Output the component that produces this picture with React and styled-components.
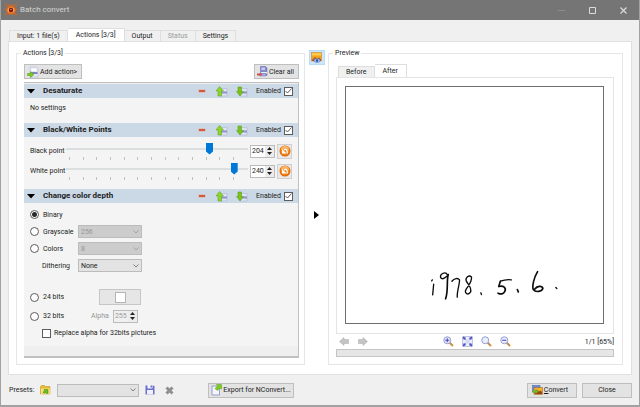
import React, { useState } from 'react';
import styled, { createGlobalStyle, css } from 'styled-components';

const GlobalStyle = createGlobalStyle`
  * {
    box-sizing: border-box;
  }
  body {
    margin: 0;
    font-family: Roboto, 'Noto Sans', sans-serif;
    font-size: 7px;
    line-height: 10px;
    color: #1c1c1c;
    background: #f0f0f0;
  }
  button, input, select {
    font: inherit;
    color: inherit;
    margin: 0;
    padding: 0;
  }
  svg {
    display: block;
    flex: none;
  }
`;

/* icons */

const LogoIcon = () => (
  <svg width="12" height="12" viewBox="0 0 24 24">
    <path
      d="M4 4L1 1M20 4l3-3M3 11H0M21 11h3M4 18l-3 4M20 18l3 4M9 3L8 0M15 3l1-3"
      stroke="#d9641c"
      strokeWidth="3"
    />
    <circle cx="12" cy="12" r="9.5" fill="#e06a20" />
    <ellipse cx="12" cy="12" rx="7" ry="5" fill="#f3ae6a" />
    <circle cx="12" cy="12" r="4.5" fill="#7c1408" />
    <circle cx="12" cy="11" r="1.5" fill="#e8a070" />
  </svg>
);

const AddIcon = () => (
  <svg width="12" height="12" viewBox="0 0 24 24">
    <path d="M6 2h13l3 3v17H6z" fill="#e4e8f6" stroke="#a9afd0" />
    <path d="M9 5h10v5H9z" fill="#fff" />
    <path d="M7 12h14v4H7z" fill="#8086c4" />
    <path d="M1 15h6v-4l7 6-7 6v-4H1z" fill="#7ccb1c" stroke="#4f9a12" />
  </svg>
);

const ClearIcon = () => (
  <svg width="11" height="11" viewBox="0 0 22 22">
    <path d="M7 1h10l3 3v15H7z" fill="#8389cc" stroke="#5c62a8" />
    <path d="M9 3h7v5H9z" fill="#c9cdf0" />
    <path d="M8 12h12v3H8z" fill="#e9ebfa" />
    <path d="M5 15h13v5H5z" fill="#a9aee0" stroke="#696fb4" />
    <path d="M0 15h10v4H0z" fill="#cf5545" />
  </svg>
);

const MinusIcon = () => (
  <svg width="8" height="4" viewBox="0 0 16 8">
    <rect x="1" y="1" width="14" height="6" rx="1" fill="#eba595" />
    <rect x="2" y="2" width="12" height="4" fill="#cf5a43" />
  </svg>
);

const MoveIcon = ({ down }) => (
  <svg width="12" height="11" viewBox="0 0 24 22">
    <path d="M8 5h14v15H8z" fill="#dfe2f2" stroke="#a9afd0" />
    <path d="M9 11h13v4H9z" fill="#8d94c8" />
    {down ? (
      <path d="M4 2h7v9h4l-7 9-7-9h3z" fill="#7ac31d" stroke="#4f9614" />
    ) : (
      <path d="M4 20h7V10h4L7 1 0 10h4z" fill="#8fd42a" stroke="#559c17" />
    )}
  </svg>
);

const ResetIcon = () => (
  <svg width="12" height="12" viewBox="0 0 24 24">
    <circle cx="12" cy="12" r="11" fill="#e26a08" />
    <circle cx="12" cy="11" r="9" fill="#f58a1f" />
    <path d="M4 10a8 8 0 0 1 16 0c-5-2-10-2-16 0z" fill="#fbb468" />
    <path d="M10 10c5-3 8 1 6 7" fill="none" stroke="#fff" strokeWidth="2.500" />
    <path d="M6 8v9h9z" fill="#fff" />
  </svg>
);

const PictureIcon = () => (
  <svg width="11" height="11" viewBox="0 0 22 22">
    <rect x="1" y="1" width="20" height="17" fill="#f3a41e" stroke="#c97b1c" />
    <path d="M2 2h18v5H2z" fill="#fdc94a" />
    <path d="M2 16l6-6 4 4 4-3 4 4v3H2z" fill="#a8541c" />
    <ellipse cx="12" cy="17" rx="6" ry="4" fill="#b9c9f0" stroke="#4668b8" />
    <circle cx="12" cy="17" r="2.500" fill="#2b4ba5" />
  </svg>
);

const FolderIcon = () => (
  <svg width="11" height="10" viewBox="0 0 22 20">
    <path d="M1 3l2-2h6l2 2h9v15H1z" fill="#e9b932" stroke="#b98a1c" />
    <path d="M2 7h18v11H2z" fill="#f8de78" />
    <path d="M8 9h8v8h-3l-2-2-3 2-2-3 3-2z" fill="#6cba22" stroke="#468f12" />
  </svg>
);

const SaveIcon = () => (
  <svg width="10" height="10" viewBox="0 0 20 20">
    <path d="M1 1h16l2 2v16H1z" fill="#6a6fd0" />
    <path d="M5 0h10v7H5z" fill="#f4f5fd" />
    <path d="M11 1h3v4h-3z" fill="#6a6fd0" />
    <path d="M4 10h12v9H4z" fill="#f0f1fb" />
  </svg>
);

const DeleteIcon = () => (
  <svg width="9" height="9" viewBox="0 0 18 18">
    <path d="M3 3l12 12M15 3L3 15" stroke="#8f8f8f" strokeWidth="6" />
  </svg>
);

const ExportIcon = () => (
  <svg width="11" height="12" viewBox="0 0 22 24">
    <path d="M2 4h15v18H2z" fill="#f4f5fd" stroke="#7d84bd" strokeWidth="1.500" />
    <path d="M8 9l5-5-2-3h10v9l-3-2-5 5z" fill="#7fcb1e" stroke="#559c17" />
  </svg>
);

const ConvertIcon = () => (
  <svg width="11" height="10" viewBox="0 0 22 20">
    <rect x="1" y="1" width="15" height="13" fill="#6b8fe0" stroke="#3f5aa8" />
    <rect x="4" y="5" width="17" height="14" fill="#f4b22a" stroke="#8c5a14" />
    <path d="M5 18v-5l5-4 4 4 3-2 3 3v4z" fill="#a04416" />
    <path d="M1 11h6V8l6 5-6 5v-3H1z" fill="#6cba22" />
  </svg>
);

const ArrowIcon = ({ right }) => (
  <svg width="10" height="9" viewBox="0 0 20 18">
    {right ? (
      <path d="M1 5h9V1l9 8-9 8v-4H1z" fill="#c4c4c4" stroke="#a9a9a9" />
    ) : (
      <path d="M19 5h-9V1L1 9l9 8v-4h9z" fill="#c4c4c4" stroke="#a9a9a9" />
    )}
  </svg>
);

const ZoomIcon = ({ sign }) => (
  <svg width="11" height="11" viewBox="0 0 22 22">
    <path d="M13 13l7 7" stroke="#c98e4a" strokeWidth="4" />
    <circle cx="8.500" cy="8.500" r="7" fill="#e9edfc" stroke="#8d95cf" strokeWidth="1.800" />
    {sign && <path d="M4.500 8.500h8" stroke="#3c44b4" strokeWidth="2" />}
    {sign === '+' && <path d="M8.500 4.500v8" stroke="#3c44b4" strokeWidth="2" />}
  </svg>
);

const FitIcon = () => (
  <svg width="11" height="11" viewBox="0 0 22 22">
    <rect x="1" y="1" width="20" height="20" fill="#8186d3" />
    <path d="M7 2h8v5h5v8h-5v5H7v-5H2V7h5z" fill="#eceefb" />
    <path d="M2 2l5 5M20 2l-5 5M2 20l5-5M20 20l-5-5" stroke="#4b51b8" strokeWidth="2.500" />
    <path d="M7 7h8v8H7z" fill="#d5d8f4" />
  </svg>
);

const ChevronIcon = () => (
  <svg width="6" height="4" viewBox="0 0 12 8">
    <path d="M1 1l5 5 5-5" fill="none" stroke="currentColor" strokeWidth="1.600" />
  </svg>
);

const CheckIcon = () => (
  <svg width="7" height="6" viewBox="0 0 14 12">
    <path d="M1 6l4 4 8-9" fill="none" stroke="#333" strokeWidth="1.600" />
  </svg>
);

const CaretIcon = () => (
  <svg width="8" height="5" viewBox="0 0 16 10">
    <path d="M0 0h16l-8 9z" fill="#000" />
  </svg>
);

const Handwriting = () => (
  <svg width="100%" height="100%" viewBox="0 0 258 237" role="img" aria-label="1978. 5. 6.">
    <g
      transform="translate(74 172) scale(0.3333)"
      fill="none"
      stroke="#0c0c0c"
      strokeWidth="4"
      strokeLinecap="round"
      strokeLinejoin="round"
    >
      <path d="M38 65l-2 3M42 78L39 110" />
      <path d="M84 50C78 38 60 46 63 58C68 66 80 58 86 49" />
      <path d="M86 49C80 70 87 96 78 122" strokeWidth="5" />
      <path d="M97 69C104 60 115 58 120 65C120 80 112 98 113 117" />
      <path d="M156 56C148 49 137 58 140 68C146 80 158 88 153 102C146 112 134 106 139 94C145 84 158 72 156 56" />
      <path d="M184 104l2 5" />
      <path d="M243 69L238 85C252 80 262 90 256 100C252 108 244 109 236 105" strokeWidth="5" />
      <path d="M243 69C254 65 266 63 276 65" />
      <path d="M294 94l3 7" strokeWidth="5" />
      <path d="M355 40C344 58 338 84 342 94C350 104 368 100 371 90C367 81 354 84 347 92" strokeWidth="5" />
      <path d="M410 88l3 3" />
    </g>
  </svg>
);

/* parts */

const fieldStyle = css`
  border: 1px solid #bcbcbc;
  border-radius: 0;
  outline: none;
`;

const Window = styled.div`
  display: flex;
  flex-direction: column;
  min-height: 100vh;
  border: solid #a2a2a2;
  border-width: 0 1px 2px;
`;

const TitleBar = styled.header`
  display: flex;
  align-items: center;
  gap: 3px;
  height: 20px;
  padding-left: 4px;
  color: #d6d6d6;
  background: #757575;
`;

const Title = styled.h1`
  flex: 1;
  margin: 0;
  font-size: 8px;
  font-weight: 400;
`;

const WindowButton = styled.button`
  display: grid;
  place-items: center;
  width: 24px;
  height: 20px;
  border: 0;
  color: ${({ $dim }) => ($dim ? '#8c8c8c' : '#dcdcdc')};
  background: none;
`;

const WindowButtons = styled.div`
  display: flex;
  gap: 7px;
  padding-right: 4px;
`;

const Main = styled.main`
  display: flex;
  flex: 1;
  flex-direction: column;
  padding: 8px 7px 0;
`;

const TabList = styled.div`
  display: flex;
  align-items: flex-end;
  height: 13px;
  padding-left: ${({ $indent }) => $indent || 0}px;
`;

const Tab = styled.button`
  height: ${({ $active }) => ($active ? 13 : 11)}px;
  padding: 0 ${({ $active }) => ($active ? 8 : 7)}px;
  border: 1px solid #dedede;
  border-bottom: 0;
  border-left-width: ${({ $first }) => ($first ? 1 : 0)}px;
  color: ${({ disabled }) => (disabled ? '#9a9a9a' : 'inherit')};
  background: ${({ $active }) => ($active ? '#fff' : '#f0f0f0')};
`;

const TabPane = styled.div`
  display: grid;
  flex: 1;
  grid-template-columns: 289fr 23px 295fr;
  padding: 6px 8px 9px 7px;
  border: 1px solid #e0e0e0;
  background: #fff;
`;

const Group = styled.fieldset`
  display: flex;
  flex-direction: column;
  min-width: 0;
  margin: 0;
  padding: 6px 5px 6px 7px;
  border: 1px solid #e6e6e6;

  legend {
    padding: 0 2px;
    margin-left: -3px;
  }
`;

const PreviewGroup = styled(Group)`
  padding: 6px 8px 7px 7px;
`;

const Toolbar = styled.div`
  display: flex;
  justify-content: space-between;
  margin-bottom: 3px;
`;

const Button = styled.button`
  display: flex;
  align-items: center;
  justify-content: center;
  gap: 1px;
  height: 15px;
  min-width: ${({ $wide }) => ($wide ? 50 : 0)}px;
  padding: 0 ${({ $pad }) => $pad || 2}px 0 2px;
  white-space: nowrap;
  border: 1px solid #bfbfbf;
  background: #e3e3e3;
`;

const ActionList = styled.div`
  flex: 1;
  padding-top: 1px;
  border: solid #c0c0c0;
  border-width: 1px 1px 2px 0;
  background: #efefef;
`;

const ActionHeader = styled.header`
  display: flex;
  align-items: center;
  height: 14px;
  padding: 0 5px 0 3px;
  background: #cbd8e5;

  h2 {
    flex: 1;
    margin: 0 0 0 8px;
    font-size: 8px;
    font-weight: 700;
  }
`;

const ActionTools = styled.div`
  display: flex;
  align-items: center;
  gap: 8px;
`;

const IconButton = styled.button`
  display: grid;
  place-items: center;
  border: 0;
  background: none;
`;

const RemoveButton = styled(IconButton)`
  width: 12px;
`;

const ResetButton = styled(IconButton)`
  width: 15px;
  height: 15px;
  border: 1px solid #d0d0d0;
  background: #e9e9e9;
`;

const ActionBody = styled.div`
  padding: ${({ $pad }) => $pad};
  background: #f4f4f4;
`;

const CheckLabel = styled.label`
  display: flex;
  flex-direction: ${({ $reverse }) => ($reverse ? 'row-reverse' : 'row')};
  align-items: center;
  gap: 3px;
`;

const CheckCell = styled.span`
  display: grid;
  place-items: center;

  > * {
    grid-area: 1 / 1;
  }
  svg {
    pointer-events: none;
  }
`;

const CheckInput = styled.input`
  appearance: none;
  width: 9px;
  height: 9px;
  border: 1px solid #5c5c5c;
  background: #fff;
`;

const PointRow = styled.div`
  display: grid;
  grid-template-columns: 34px 1fr 25px 15px;
  align-items: center;
  height: 20px;
  column-gap: 2px;
  white-space: nowrap;
`;

const SliderBox = styled.div`
  display: flex;
  flex-direction: column;
`;

const Slider = styled.input`
  appearance: none;
  width: 100%;
  height: 12px;
  background: linear-gradient(#dcdfdf, #dcdfdf) center / 100% 2px no-repeat;
  outline: none;

  &::-webkit-slider-thumb {
    appearance: none;
    width: 7px;
    height: 12px;
    background: #0078d7;
    clip-path: polygon(0 0, 100% 0, 100% 75%, 50% 100%, 0 75%);
  }
`;

const Ticks = styled.div`
  display: flex;
  justify-content: space-between;
  padding: 2px 14px 0 3px;

  i {
    width: 1px;
    height: 3px;
    background: #c2c2bc;
  }
`;

const NumberBox = styled.div`
  ${fieldStyle}
  display: flex;
  width: 25px;
  height: 13px;
  color: ${({ $disabled }) => ($disabled ? '#9a9a9a' : 'inherit')};
  background: ${({ $disabled }) => ($disabled ? '#f0f0f0' : '#fff')};

  input {
    appearance: textfield;
    flex: 1;
    min-width: 0;
    padding-left: 1px;
    border: 0;
    outline: none;
    background: none;
  }
  input::-webkit-inner-spin-button {
    display: none;
  }
`;

const Spin = styled.span`
  display: flex;
  flex-direction: column;
  justify-content: space-evenly;
  width: 9px;
  background: #ececec;
`;

const Options = styled.div`
  display: grid;
  grid-template-columns: 48px 64px;
  grid-auto-rows: 17px;
  align-items: center;
`;

const RadioLabel = styled.label`
  display: flex;
  align-items: center;
  gap: 4px;
`;

const Radio = styled.input`
  appearance: none;
  width: 9px;
  height: 9px;
  border: 1px solid #5c5c5c;
  border-radius: 50%;
  background: #fff;

  &:checked {
    background: radial-gradient(#2b2b2b 0 2px, #fff 3px);
  }
`;

const IndentLabel = styled.label`
  padding-left: 12px;
`;

const SelectBox = styled.div`
  display: grid;
  align-items: center;
  width: ${({ $width }) => $width}px;
  color: ${({ $disabled }) => ($disabled ? '#969696' : 'inherit')};

  > * {
    grid-area: 1 / 1;
  }
  svg {
    justify-self: end;
    margin-right: 3px;
    color: ${({ $disabled }) => ($disabled ? '#969696' : '#6a6a6a')};
    pointer-events: none;
  }
`;

const SelectInput = styled.select`
  ${fieldStyle}
  appearance: none;
  width: 100%;
  height: 13px;
  padding: 0 2px;
  opacity: 1;
  background: ${({ disabled }) => (disabled ? '#cccccc' : '#e3e3e3')};
`;

const BitRows = styled.div`
  display: grid;
  grid-template-columns: 57px auto;
  grid-template-rows: 20px 18px;
  align-items: center;
  padding-top: 13px;
`;

const ColorButton = styled.button`
  display: grid;
  place-items: center;
  width: 42px;
  height: 16px;
  margin-left: 12px;
  border: 1px solid #c6c6c6;
  background: #e6e6e6;

  span {
    width: 11px;
    height: 11px;
    border: 1px solid #b4b4b4;
    background: #fff;
  }
`;

const AlphaLabel = styled.label`
  display: flex;
  align-items: center;
  gap: 4px;
  padding-left: 4px;
  color: #969696;
`;

const ReplaceRow = styled.div`
  padding: 3px 0 0 12px;
`;

const Divider = styled.div`
  display: flex;
  flex-direction: column;
  align-items: center;
  padding-top: 2px;
`;

const PreviewToggle = styled(IconButton)`
  width: 16px;
  height: 15px;
  border: 1px solid #b5dcf9;
  background: #cce6fb;
`;

const Splitter = styled.div`
  display: flex;
  flex: 1;
  align-items: center;
`;

const ImagePane = styled.div`
  display: flex;
  flex: 1;
  padding: 8px 9px 9px 8px;
  border: 1px solid #e4e4e4;
`;

const ImageFrame = styled.div`
  display: grid;
  flex: 1;
  min-height: 236px;
  border: 1px solid #6e6e6e;
  background: #fff;
`;

const ViewBar = styled.div`
  display: grid;
  grid-template-columns: 1fr auto 1fr;
  align-items: center;
  height: 15px;
`;

const ViewGroup = styled.div`
  display: flex;
  gap: ${({ $gap }) => $gap}px;
  padding-left: ${({ $indent }) => $indent || 0}px;
`;

const PageInfo = styled.span`
  justify-self: end;
`;

const Progress = styled.progress`
  appearance: none;
  display: block;
  width: 100%;
  height: 8px;
  border: 1px solid #c4c4c4;

  &::-webkit-progress-bar {
    background: #e6e6e6;
  }
`;

const Footer = styled.footer`
  display: flex;
  align-items: center;
  gap: 5px;
  height: 30px;
  padding: 0 7px 0 8px;
`;

const PresetTools = styled.div`
  display: flex;
  flex: 1;
  align-items: center;
  gap: 6px;
`;

const DeletePreset = styled(IconButton)`
  margin: 0 28px 0 4px;
`;

function Checkbox({ label, checked: initial = false, reverse }) {
  const [checked, setChecked] = useState(initial);
  return (
    <CheckLabel $reverse={reverse}>
      <CheckCell>
        <CheckInput
          type='checkbox'
          checked={checked}
          onChange={(e) => setChecked(e.target.checked)}
        />
        {checked && <CheckIcon />}
      </CheckCell>
      {label}
    </CheckLabel>
  );
}

function Select({ id, label, width = 64, disabled, options }) {
  return (
    <SelectBox $width={width} $disabled={disabled}>
      <SelectInput id={id} aria-label={label} disabled={disabled}>
        {options.map((option) => (
          <option key={option}>{option}</option>
        ))}
      </SelectInput>
      <ChevronIcon />
    </SelectBox>
  );
}

function NumberField({ label, id, value, onChange, disabled }) {
  const step = (diff) => onChange(Math.min(255, Math.max(0, value + diff)));
  return (
    <NumberBox $disabled={disabled}>
      <input
        id={id}
        type='number'
        min='0'
        max='255'
        aria-label={label}
        value={value}
        disabled={disabled}
        onChange={(e) => onChange(Number(e.target.value))}
      />
      <Spin>
        <IconButton aria-label='Increase' disabled={disabled} onClick={() => step(1)}>
          <svg width="5" height="3" viewBox="0 0 10 6">
            <path d="M0 6h10L5 0z" fill="#222" />
          </svg>
        </IconButton>
        <IconButton aria-label='Decrease' disabled={disabled} onClick={() => step(-1)}>
          <svg width="5" height="3" viewBox="0 0 10 6">
            <path d="M0 0h10L5 6z" fill="#222" />
          </svg>
        </IconButton>
      </Spin>
    </NumberBox>
  );
}

function PointSlider({ id, label, initial }) {
  const [value, setValue] = useState(initial);
  return (
    <PointRow>
      <label htmlFor={id}>{label}</label>
      <SliderBox>
        <Slider
          id={id}
          type='range'
          min='0'
          max='255'
          value={value}
          onChange={(e) => setValue(Number(e.target.value))}
        />
        <Ticks>
          {Array.from({ length: 13 }, (_, i) => (
            <i key={i} />
          ))}
        </Ticks>
      </SliderBox>
      <NumberField label={label} value={value} onChange={setValue} />
      <ResetButton aria-label='Reset' onClick={() => setValue(initial)}>
        <ResetIcon />
      </ResetButton>
    </PointRow>
  );
}

function Action({ title, pad, children }) {
  return (
    <section>
      <ActionHeader>
        <CaretIcon />
        <h2>{title}</h2>
        <ActionTools>
          <RemoveButton aria-label='Remove'>
            <MinusIcon />
          </RemoveButton>
          <IconButton aria-label='Move up'>
            <MoveIcon />
          </IconButton>
          <IconButton aria-label='Move down'>
            <MoveIcon down />
          </IconButton>
          <Checkbox label='Enabled' checked reverse />
        </ActionTools>
      </ActionHeader>
      <ActionBody $pad={pad}>{children}</ActionBody>
    </section>
  );
}

function ColorDepth() {
  const [depth, setDepth] = useState('Binary');
  const [alpha, setAlpha] = useState(255);
  const radio = (name) => (
    <RadioLabel>
      <Radio
        type='radio'
        name='depth'
        checked={depth === name}
        onChange={() => setDepth(name)}
      />
      {name}
    </RadioLabel>
  );
  return (
    <>
      <Options>
        {radio('Binary')}
        <span />
        {radio('Grayscale')}
        <Select label='Gray levels' options={['256']} disabled={depth !== 'Grayscale'} />
        {radio('Colors')}
        <Select label='Color count' options={['8']} disabled={depth !== 'Colors'} />
        <IndentLabel htmlFor='dithering'>Dithering</IndentLabel>
        <Select id='dithering' options={['None']} />
      </Options>
      <BitRows>
        {radio('24 bits')}
        <ColorButton aria-label='Background color'>
          <span />
        </ColorButton>
        {radio('32 bits')}
        <AlphaLabel htmlFor='alpha'>
          Alpha
          <NumberField
            id='alpha'
            value={alpha}
            onChange={setAlpha}
            disabled={depth !== '32 bits'}
          />
        </AlphaLabel>
      </BitRows>
      <ReplaceRow>
        <Checkbox label='Replace alpha for 32bits pictures' />
      </ReplaceRow>
    </>
  );
}

function Preview() {
  const [tab, setTab] = useState('After');
  return (
    <PreviewGroup>
      <legend>Preview</legend>
      <TabList $indent={2}>
        {['Before', 'After'].map((name, i) => (
          <Tab
            key={name}
            $first={i === 0}
            $active={tab === name}
            onClick={() => setTab(name)}
          >
            {name}
          </Tab>
        ))}
      </TabList>
      <ImagePane>
        <ImageFrame>
          <Handwriting />
        </ImageFrame>
      </ImagePane>
      <ViewBar>
        <ViewGroup $gap={9} $indent={3}>
          <IconButton aria-label='Previous'>
            <ArrowIcon />
          </IconButton>
          <IconButton aria-label='Next'>
            <ArrowIcon right />
          </IconButton>
        </ViewGroup>
        <ViewGroup $gap={8} $indent={4}>
          <IconButton aria-label='Zoom in'>
            <ZoomIcon sign='+' />
          </IconButton>
          <IconButton aria-label='Fit'>
            <FitIcon />
          </IconButton>
          <IconButton aria-label='Actual size'>
            <ZoomIcon />
          </IconButton>
          <IconButton aria-label='Zoom out'>
            <ZoomIcon sign='-' />
          </IconButton>
        </ViewGroup>
        <PageInfo>1/1 [65%]</PageInfo>
      </ViewBar>
      <Progress value='0' max='100' aria-label='Progress' />
    </PreviewGroup>
  );
}

const tabs = ['Input: 1 file(s)', 'Actions [3/3]', 'Output', 'Status', 'Settings'];

function App() {
  const [tab, setTab] = useState(tabs[1]);

  return (
    <Window>
      <GlobalStyle />
      <TitleBar>
        <LogoIcon />
        <Title>Batch convert</Title>
        <WindowButtons>
          <WindowButton $dim aria-label='Minimize'>
            <svg width="7" height="7" viewBox="0 0 7 7">
              <path d="M0 3.500h7" stroke="currentColor" />
            </svg>
          </WindowButton>
          <WindowButton aria-label='Maximize'>
            <svg width="7" height="7" viewBox="0 0 7 7">
              <path d="M.5.5h6v6h-6z" fill="none" stroke="currentColor" />
            </svg>
          </WindowButton>
          <WindowButton aria-label='Close window'>
            <svg width="7" height="7" viewBox="0 0 7 7">
              <path d="M.5.5l6 6M6.500.5l-6 6" stroke="currentColor" strokeWidth="1.200" />
            </svg>
          </WindowButton>
        </WindowButtons>
      </TitleBar>
      <Main>
        <TabList $indent={1}>
          {tabs.map((name, i) => (
            <Tab
              key={name}
              $first={i === 0}
              $active={tab === name}
              disabled={name === 'Status'}
              onClick={() => setTab(name)}
            >
              {name}
            </Tab>
          ))}
        </TabList>
        <TabPane>
          <Group>
            <legend>Actions [3/3]</legend>
            <Toolbar>
              <Button $pad={4}>
                <AddIcon />
                Add action&gt;
              </Button>
              <Button $pad={4}>
                <ClearIcon />
                Clear all
              </Button>
            </Toolbar>
            <ActionList>
              <Action title='Desaturate' pad='5px 6px 10px'>
                No settings
              </Action>
              <Action title='Black/White Points' pad='4px 6px 8px'>
                <PointSlider id='black' label='Black point' initial={204} />
                <PointSlider id='white' label='White point' initial={240} />
              </Action>
              <Action title='Change color depth' pad='3px 6px 8px'>
                <ColorDepth />
              </Action>
            </ActionList>
          </Group>
          <Divider>
            <PreviewToggle aria-label='Toggle preview'>
              <PictureIcon />
            </PreviewToggle>
            <Splitter>
              <svg width="5" height="8" viewBox="0 0 5 8">
                <path d="M0 0l5 4-5 4z" fill="#000" />
              </svg>
            </Splitter>
          </Divider>
          <Preview />
        </TabPane>
      </Main>
      <Footer>
        <PresetTools>
          <label htmlFor='presets'>Presets:</label>
          <IconButton aria-label='Open preset'>
            <FolderIcon />
          </IconButton>
          <Select id='presets' width={82} options={['']} />
          <IconButton aria-label='Save preset'>
            <SaveIcon />
          </IconButton>
          <DeletePreset aria-label='Delete preset'>
            <DeleteIcon />
          </DeletePreset>
          <Button>
            <ExportIcon />
            Export for NConvert...
          </Button>
        </PresetTools>
        <Button $wide $pad={6}>
          <ConvertIcon />
          <span>
            <u>C</u>onvert
          </span>
        </Button>
        <Button $wide $pad={2}>Close</Button>
      </Footer>
    </Window>
  );
}

export default App;
